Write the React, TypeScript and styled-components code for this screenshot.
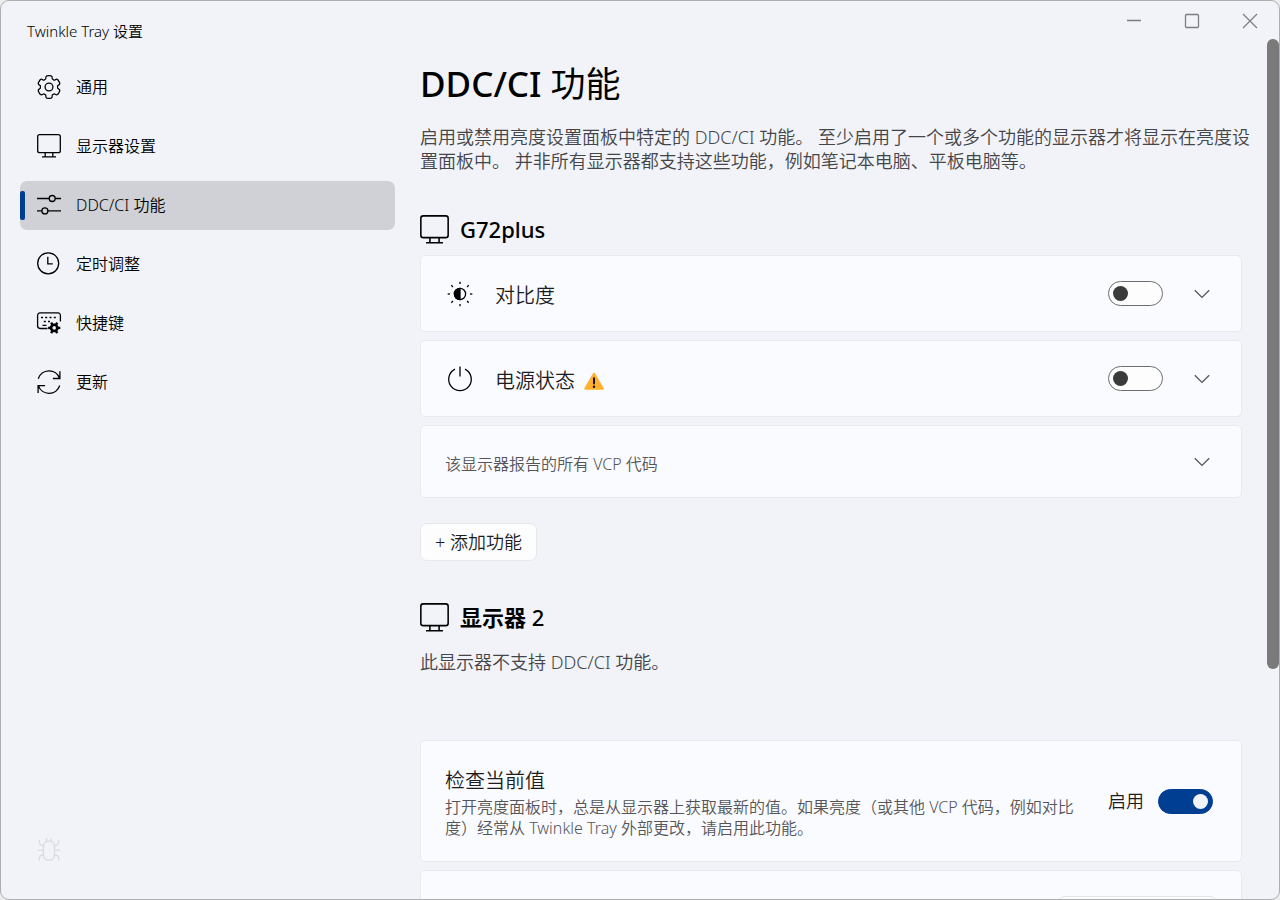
import React, { useState } from "react";
import styled, { createGlobalStyle, css } from "styled-components";

const GlobalStyle = createGlobalStyle`
  *, *::before, *::after { box-sizing: border-box; }
  html, body, #root { height: 100%; }
  body {
    margin: 0;
    background: #ededee;
    color: #000;
    font-family: "Noto Sans", "Noto Sans CJK SC", sans-serif;
    font-weight: 350;
    overflow: hidden;
  }
  button, select, input { font: inherit; color: inherit; margin: 0; }
  h1, h2, h3, p, ul { margin: 0; padding: 0; }
`;

const Window = styled.div`
  height: 100%;
  display: flex;
  flex-direction: column;
  overflow: hidden;
  border: 1px solid #adaeb0;
  border-radius: 9px;
  background: #f1f3f8;
`;

const TitleBar = styled.header`
  height: 38px;
  flex: none;
  display: flex;
  justify-content: space-between;
  padding-left: 26px;
`;

const WindowTitle = styled.div`
  padding-top: 18px;
  font-size: 15px;
  line-height: 24px;
`;

const WindowControls = styled.div`
  display: flex;
`;

const ControlButton = styled.button`
  width: 58px;
  height: 40px;
  display: grid;
  place-items: center;
  padding: 0;
  border: 0;
  background: none;
  color: #7d7e80;
`;

const Body = styled.div`
  flex: 1;
  min-height: 0;
  display: flex;
`;

const Sidebar = styled.aside`
  width: 419px;
  flex: none;
  display: flex;
  flex-direction: column;
  justify-content: space-between;
  padding: 24px 25px 36px 19px;
`;

const NavList = styled.nav`
  display: flex;
  flex-direction: column;
  gap: 10px;
`;

const NavItem = styled.a<{ $active?: boolean }>`
  height: 49px;
  display: flex;
  align-items: center;
  padding: 0 0 1px 16px;
  border-radius: 7px;
  font-size: 16px;
  line-height: 24px;
  color: #000;
  text-decoration: none;
  ${(p) =>
    p.$active &&
    css`
      padding-left: 0;
      background: #d0d1d6;
      &::before {
        content: "";
        width: 5px;
        height: 29px;
        margin-right: 11px;
        border-radius: 2px;
        background: #003e92;
      }
    `}
`;

const NavIcon = styled.span`
  width: 40px;
  display: flex;
  flex: none;
`;

const BugButton = styled.button`
  align-self: flex-start;
  margin-left: 16px;
  padding: 0;
  border: 0;
  background: none;
  color: #d9dbe0;
  line-height: 0;
`;

const Content = styled.main`
  flex: 1;
  min-width: 0;
  overflow: hidden;
  padding: 21px 25px 0 0;
`;

const PageTitle = styled.h1`
  font-size: 35px;
  line-height: 48px;
  font-weight: 500;
`;

const HeadingPart = styled.span<{ $weight: number }>`
  font-weight: ${(p) => p.$weight};
`;

const Text = styled.p<{ $gap: number }>`
  margin: ${(p) => p.$gap}px -12px 0 0;
  font-size: 18px;
  line-height: 24px;
  color: #444548;
`;

const MonitorTitle = styled.h2`
  display: flex;
  align-items: center;
  gap: 11px;
  margin-top: 41px;
  font-size: 22px;
  line-height: 30px;
  font-weight: 500;
`;

const CardList = styled.div<{ $gap: number }>`
  display: flex;
  flex-direction: column;
  gap: 8px;
  margin-top: ${(p) => p.$gap}px;
`;

const Card = styled.section<{ $height: number }>`
  min-height: ${(p) => p.$height}px;
  display: flex;
  align-items: center;
  padding: 0 28px 0 24px;
  border: 1px solid #e8eaee;
  border-radius: 5px;
  background: #fafbfe;
`;

const CardIcon = styled.span`
  width: 50px;
  flex: none;
  line-height: 0;
`;

const CardLabel = styled.label`
  flex: 1;
  display: flex;
  align-items: center;
  gap: 9px;
  padding-top: 4px;
  font-size: 20px;
  line-height: 28px;
  color: #1d1d1f;
`;

const CodesLabel = styled.span`
  flex: 1;
  padding-top: 4px;
  font-size: 16px;
  line-height: 22px;
  color: #55565a;
`;

const ExpandButton = styled.button`
  width: 22px;
  height: 28px;
  display: grid;
  place-items: center;
  margin-left: 28px;
  padding: 0;
  border: 0;
  background: none;
  color: #55565a;
`;

const Switch = styled.input`
  appearance: none;
  width: 55px;
  height: 25px;
  flex: none;
  display: flex;
  align-items: center;
  padding: 0 4px;
  border: 1px solid #6c6d6f;
  border-radius: 13px;
  background: #fdfdfe;
  &::before {
    content: "";
    width: 15px;
    height: 15px;
    border-radius: 50%;
    background: #3a3b3b;
  }
  &:checked {
    justify-content: flex-end;
    border-color: #003e92;
    background: #003e92;
  }
  &:checked::before { background: #f1f3f8; }
`;

const AddButton = styled.button`
  height: 38px;
  margin-top: 25px;
  padding: 0 14px;
  border: 1px solid #e6e8ec;
  border-radius: 7px;
  background: #fdfdfe;
  font-size: 18px;
  line-height: 24px;
  color: #1d1d1f;
`;

const SettingText = styled.div`
  flex: 1;
  padding: 4px 30px 0 0;
`;

const SettingName = styled.h3`
  margin-bottom: 2px;
  font-size: 20px;
  line-height: 28px;
  font-weight: 350;
  color: #1d1d1f;
`;

const SettingNote = styled.p`
  font-size: 16px;
  line-height: 21px;
  color: #55565a;
`;

const SwitchLabel = styled.label`
  display: flex;
  align-items: center;
  gap: 14px;
  font-size: 18px;
  line-height: 24px;
  color: #1d1d1f;
`;

const SelectCard = styled(Card)`
  align-items: flex-start;
  justify-content: flex-end;
  padding: 25px 24px 0 24px;
`;

const Select = styled.select`
  appearance: none;
  width: 159px;
  height: 38px;
  border: 1px solid #e2e4e8;
  border-radius: 7px;
  background: #fdfdfe;
`;

const ScrollTrack = styled.div`
  width: 12px;
  flex: none;
`;

const ScrollThumb = styled.div`
  height: 73.2%;
  border-radius: 6px;
  background: #7a7a7a;
`;

type IconProps = { size?: number };

const line = { fill: "none", stroke: "currentColor", strokeWidth: 1.3 } as const;

const teeth = [0, 60, 120, 180, 240, 300];

const polar = (angle: number, radius: number) => {
  const t = (angle * Math.PI) / 180;
  return `${(13 + radius * Math.sin(t)).toFixed(2)} ${(13 - radius * Math.cos(t)).toFixed(2)}`;
};

const gearPath =
  teeth
    .map(
      (a, i) =>
        `${i ? "L" : "M"}${polar(a - 19, 9.6)}Q${polar(a - 17, 11.2)} ${polar(a - 11, 11.4)}` +
        `Q${polar(a, 11.6)} ${polar(a + 11, 11.4)}Q${polar(a + 17, 11.2)} ${polar(a + 19, 9.6)}` +
        `Q${polar(a + 21, 8.2)} ${polar(a + 30, 8.6)}Q${polar(a + 39, 8.2)} ${polar(a + 41, 9.6)}`
    )
    .join("") + "Z";

const GearIcon = () => (
  <svg width="26" height="26" viewBox="0 0 26 26" {...line} strokeLinejoin="round">
    <path d={gearPath} />
    <circle cx="13" cy="13" r="3.9" />
  </svg>
);

const MonitorIcon = ({ size = 26 }: IconProps) => (
  <svg width={size} height={size} viewBox={size > 26 ? "1 1 24 24" : "0 0 26 26"} {...line}>
    <rect x="1.7" y="1.7" width="22.6" height="18" rx="2" />
    <path d="M9.2 19.7v4M16.8 19.7v4M6 23.9h14" />
  </svg>
);

const SlidersIcon = () => (
  <svg width="26" height="26" viewBox="0 0 26 26" {...line}>
    <path d="M1 6.500h12M19.200 6.500H25M1 18.900h4.800M12 18.900h13" />
    <circle cx="16.200" cy="6.500" r="3" />
    <circle cx="8.900" cy="18.900" r="3" />
  </svg>
);

const ClockIcon = () => (
  <svg width="26" height="26" viewBox="0 0 26 26" {...line}>
    <circle cx="12.200" cy="12.300" r="10.500" />
    <path d="M11.800 5.800v7h5" />
  </svg>
);

const KeyboardIcon = () => (
  <svg width="26" height="26" viewBox="0 0 26 26" {...line}>
    <path d="M11.500 18.500H4a2.400 2.400 0 0 1-2.400-2.400V5.300A2.400 2.400 0 0 1 4 2.900h18a2.400 2.400 0 0 1 2.400 2.400v6.200" />
    <path d="M5 7.500h2M9.200 7.500h2M13.500 7.500h2M17.800 7.500h2M7.800 11.500h2M12 11.500h2M6.500 15.300h4" />
    <circle cx="18.200" cy="17.900" r="3.100" strokeWidth="2.600" />
    {teeth.map((a) => (
      <path key={a} d="M18.200 14.500v-2.700" strokeWidth="2.400" transform={`rotate(${a + 30} 18.200 17.900)`} />
    ))}
  </svg>
);

const RefreshIcon = () => (
  <svg width="26" height="26" viewBox="0 0 26 26" {...line}>
    <path d="M2.300 9.800A11.200 11.200 0 0 1 23.600 9.400M23.900 2.200v7.300h-7M23.700 16.500A11.200 11.200 0 0 1 2.400 16.800M2.100 24v-7.300h7" />
  </svg>
);

const BugIcon = () => (
  <svg width="26" height="26" viewBox="0 0 26 26" {...line}>
    <rect x="7.500" y="4.200" width="11" height="19" rx="5" />
    <path d="M10.500 4.200V1.300M15.300 4.200V1.300M7.500 8.500C4.500 8.500 3.400 7.400 3.400 5V2.800M18.500 8.500c3 0 4.100-1.100 4.100-3.500V2.800M1.500 13.200h6M18.500 13.200h6M7.500 18c-3 0-4.100 1-4.100 3v2.500M18.500 18c3 0 4.100 1 4.100 3v2.500" />
  </svg>
);

const rays = [0, 45, 90, 135, 180, 225, 270, 315];

const ContrastIcon = () => (
  <svg width="30" height="30" viewBox="0 0 30 30" {...line}>
    <circle cx="15" cy="15" r="5.600" />
    <path d="M15 9.400a5.600 5.600 0 0 0 0 11.200z" fill="currentColor" />
    {rays.map((a) => (
      <path key={a} d="M15 5V2.700" transform={`rotate(${a} 15 15)`} />
    ))}
  </svg>
);

const PowerIcon = () => (
  <svg width="30" height="30" viewBox="0 0 30 30" {...line}>
    <path d="M15 2.500v10M10 5.200a11.300 11.300 0 1 0 10 0" />
  </svg>
);

const WarningIcon = () => (
  <svg width="20" height="20" viewBox="0 0 20 20">
    <path d="M9.100 2.200a1.100 1.100 0 0 1 1.900 0l8.700 15c.4.800 0 1.500-.9 1.500H1.300c-.9 0-1.300-.700-.9-1.500z" fill="#ffb02e" />
    <path d="M10 7.200v5.200" stroke="#1a1206" strokeWidth="2" strokeLinecap="round" />
    <circle cx="10" cy="15.700" r="1.200" fill="#1a1206" />
  </svg>
);

const ChevronIcon = () => (
  <svg width="16" height="10" viewBox="0 0 16 10" {...line}>
    <path d="M.8 1.200 8 8.400l7.200-7.200" />
  </svg>
);

const navItems = [
  { label: "通用", icon: <GearIcon /> },
  { label: "显示器设置", icon: <MonitorIcon /> },
  { label: "DDC/CI 功能", icon: <SlidersIcon />, active: true },
  { label: "定时调整", icon: <ClockIcon /> },
  { label: "快捷键", icon: <KeyboardIcon /> },
  { label: "更新", icon: <RefreshIcon /> },
];

type FeatureProps = { id: string; name: string; icon: React.ReactNode; warning?: boolean };

const FeatureCard = ({ id, name, icon, warning }: FeatureProps) => {
  const [on, setOn] = useState(false);
  return (
    <Card $height={77}>
      <CardIcon>{icon}</CardIcon>
      <CardLabel htmlFor={id}>
        {name}
        {warning && <WarningIcon />}
      </CardLabel>
      <Switch id={id} type="checkbox" role="switch" checked={on} onChange={() => setOn(!on)} />
      <ExpandButton aria-label="展开">
        <ChevronIcon />
      </ExpandButton>
    </Card>
  );
};

export default function App() {
  const [check, setCheck] = useState(true);
  return (
    <>
      <GlobalStyle />
      <Window>
        <TitleBar>
          <WindowTitle>Twinkle Tray 设置</WindowTitle>
          <WindowControls>
            <ControlButton aria-label="最小化">
              <svg width="16" height="16" viewBox="0 0 16 16" {...line}>
                <path d="M1 7.500h14" />
              </svg>
            </ControlButton>
            <ControlButton aria-label="最大化">
              <svg width="16" height="16" viewBox="0 0 16 16" {...line}>
                <rect x="1.500" y="1.500" width="13" height="13" rx="1" />
              </svg>
            </ControlButton>
            <ControlButton aria-label="关闭">
              <svg width="16" height="16" viewBox="0 0 16 16" {...line}>
                <path d="m1 1 14 14M15 1 1 15" />
              </svg>
            </ControlButton>
          </WindowControls>
        </TitleBar>
        <Body>
          <Sidebar>
            <NavList>
              {navItems.map((item) => (
                <NavItem key={item.label} href="#" $active={item.active}>
                  <NavIcon>{item.icon}</NavIcon>
                  {item.label}
                </NavItem>
              ))}
            </NavList>
            <BugButton aria-label="调试">
              <BugIcon />
            </BugButton>
          </Sidebar>
          <Content>
            <PageTitle>
              DDC/CI <HeadingPart $weight={400}>功能</HeadingPart>
            </PageTitle>
            <Text $gap={17}>
              启用或禁用亮度设置面板中特定的 DDC/CI 功能。 至少启用了一个或多个功能的显示器才将显示在亮度设置面板中。 并非所有显示器都支持这些功能，例如笔记本电脑、平板电脑等。
            </Text>
            <MonitorTitle>
              <MonitorIcon size={29} />
              G72plus
            </MonitorTitle>
            <CardList $gap={11}>
              <FeatureCard id="contrast" name="对比度" icon={<ContrastIcon />} />
              <FeatureCard id="power" name="电源状态" icon={<PowerIcon />} warning />
              <Card $height={73}>
                <CodesLabel>该显示器报告的所有 VCP 代码</CodesLabel>
                <ExpandButton aria-label="展开">
                  <ChevronIcon />
                </ExpandButton>
              </Card>
            </CardList>
            <AddButton>+ 添加功能</AddButton>
            <MonitorTitle>
              <MonitorIcon size={29} />
              <span>
                <HeadingPart $weight={700}>显示器</HeadingPart> 2
              </span>
            </MonitorTitle>
            <Text $gap={18}>此显示器不支持 DDC/CI 功能。</Text>
            <CardList $gap={66}>
              <Card $height={122}>
                <SettingText>
                  <SettingName>检查当前值</SettingName>
                  <SettingNote>
                    打开亮度面板时，总是从显示器上获取最新的值。如果亮度（或其他 VCP 代码，例如对比度）经常从 Twinkle Tray 外部更改，请启用此功能。
                  </SettingNote>
                </SettingText>
                <SwitchLabel>
                  启用
                  <Switch type="checkbox" role="switch" checked={check} onChange={() => setCheck(!check)} />
                </SwitchLabel>
              </Card>
              <SelectCard $height={122}>
                <Select aria-label="选项" />
              </SelectCard>
            </CardList>
          </Content>
          <ScrollTrack>
            <ScrollThumb />
          </ScrollTrack>
        </Body>
      </Window>
    </>
  );
}
